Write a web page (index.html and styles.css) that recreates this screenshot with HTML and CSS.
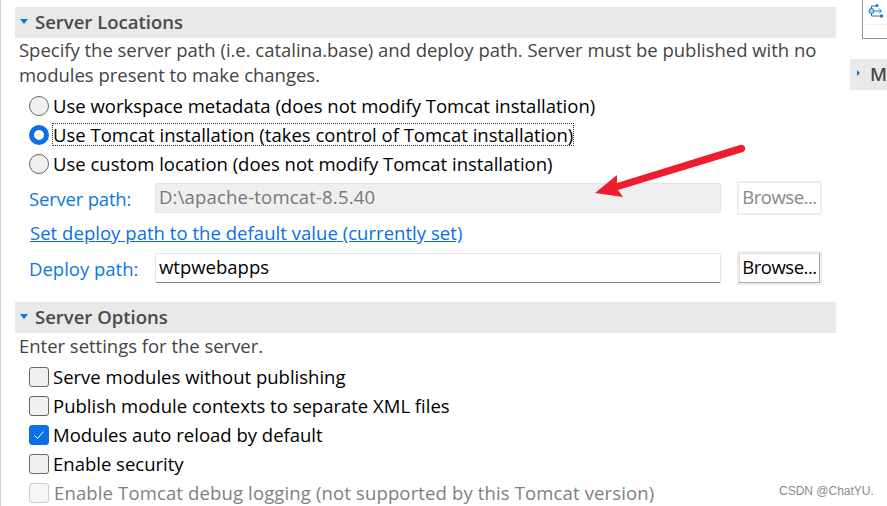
FILE: index.html
```html
<!DOCTYPE html>
<html lang="en">
<head>
    <meta charset="UTF-8">
    <title>Server Overview</title>
    <link rel="stylesheet" href="styles.css">
</head>
<body>
<div class="page">
    <div class="left">
        <div class="bar">
            <svg class="twisty" width="8" height="5" viewBox="0 0 8 5"><path d="M0 0H8L4 5Z"/></svg>
            <span>Server Locations</span>
        </div>
        <p class="desc">Specify the server path (i.e. catalina.base) and deploy path. Server must be published with no modules present to make changes.</p>
        <div class="options radios">
            <label class="opt"><span class="radio"></span><span>Use workspace metadata (does not modify Tomcat installation)</span></label>
            <label class="opt"><span class="radio on"></span><span class="focus">Use Tomcat installation (takes control of Tomcat installation)</span></label>
            <label class="opt"><span class="radio"></span><span>Use custom location (does not modify Tomcat installation)</span></label>
        </div>
        <div class="field server-row">
            <span class="lbl">Server path:</span>
            <span class="input off">D:\apache-tomcat-8.5.40</span>
            <span class="btn off">Browse...</span>
        </div>
        <a class="link" href="#">Set deploy path to the default value (currently set)</a>
        <div class="field deploy-row">
            <span class="lbl">Deploy path:</span>
            <span class="input">wtpwebapps</span>
            <span class="btn">Browse...</span>
        </div>
        <div class="bar bar2">
            <svg class="twisty" width="8" height="5" viewBox="0 0 8 5"><path d="M0 0H8L4 5Z"/></svg>
            <span>Server Options</span>
        </div>
        <p class="desc desc2">Enter settings for the server.</p>
        <div class="options checks">
            <label class="opt"><span class="check"></span><span>Serve modules without publishing</span></label>
            <label class="opt"><span class="check"></span><span>Publish module contexts to separate XML files</span></label>
            <label class="opt"><span class="check on"><svg width="12" height="10" viewBox="0 0 12 10"><path d="M1.5 5.5L4.5 8.5L10.5 1.5" fill="none" stroke="#fff" stroke-width="1"/></svg></span><span>Modules auto reload by default</span></label>
            <label class="opt"><span class="check"></span><span>Enable security</span></label>
            <label class="opt dis"><span class="check"></span><span>Enable Tomcat debug logging (not supported by this Tomcat version)</span></label>
        </div>
    </div>
    <div class="right">
        <div class="panel">
            <svg width="16" height="14" viewBox="0 0 16 14"><g fill="none" stroke="#1a74c4" stroke-width="1"><path d="M4 7H13M11 4.500L13.500 7L11 9.500"/><path d="M3.500 7V12H12"/><path d="M3.500 7V2H8"/><circle cx="3.500" cy="7" r="2.500" fill="#a9d0ee"/></g><circle cx="9" cy="1.500" r="1.500" fill="#1a74c4"/><circle cx="13.500" cy="12" r="1.700" fill="#1a74c4"/></svg>
        </div>
        <div class="side-bar">
            <svg width="4" height="8" viewBox="0 0 4 8"><path d="M0 0L4 4L0 8Z" fill="#0a78e0"/></svg>
            <span>M</span>
        </div>
    </div>
</div>
<svg class="arrow" width="160" height="60" viewBox="0 0 160 60"><path d="M148 2L25 40L25 32L3 50L31 54L26 47L151 9Q154 7 153 4Q151 1 148 2Z" fill="#ee1d2c"/></svg>
<div class="mark">CSDN @ChatYU.</div>
</body>
</html>
```

FILE: styles.css
```css
html, body {
    margin: 0;
    height: 506px;
    overflow: hidden;
    background: #fff;
}
body {
    position: relative;
    font-family: "Open Sans", "Liberation Sans", sans-serif;
    font-size: 18.5px;
    color: #000;
}
.page {
    display: flex;
    height: 506px;
    border-left: 1px solid #cfcfcf;
    box-sizing: border-box;
}
.left {
    width: 821px;
    margin-left: 14px;
    padding-top: 7px;
    flex: none;
}
.bar {
    height: 31px;
    box-sizing: border-box;
    padding-bottom: 3px;
    background: #e9e9e9;
    display: flex;
    align-items: center;
    gap: 7px;
    padding-left: 5px;
    font-weight: 600;
    color: #4a4a4a;
}
.twisty {
    fill: #0a78e0;
}
.desc {
    margin: -1px 0 0;
    padding: 0 4px;
    line-height: 25px;
    letter-spacing: -0.02px;
    color: #444;
}
.options {
    display: flex;
    flex-direction: column;
    margin-left: 14px;
}
.radios {
    margin-top: 4px;
}
.opt {
    height: 29px;
    display: flex;
    align-items: center;
    gap: 4px;
    white-space: nowrap;
}
.radio {
    width: 18px;
    height: 18px;
    border: 1px solid #666;
    border-radius: 50%;
    background: #f0f0f0;
    flex: none;
}
.radio.on {
    width: 10px;
    height: 10px;
    border: 5px solid #0a6fe8;
    background: #fff;
}
.focus {
    outline: 1px dotted #333;
    line-height: 21px;
}
.field {
    display: flex;
    align-items: center;
}
.server-row {
    margin-top: 3px;
    height: 34px;
}
.deploy-row {
    margin-top: 6px;
    height: 34px;
}
.lbl {
    width: 126px;
    margin-left: 14px;
    flex: none;
    color: #0a78e0;
}
.server-row .lbl {
    letter-spacing: -0.2px;
}
.input {
    width: 566px;
    height: 30px;
    line-height: 26px;
    box-sizing: border-box;
    padding-left: 3px;
    border: 1px solid #e6e6e6;
    border-bottom-color: #888;
    border-radius: 2px;
    flex: none;
}
.input.off {
    background: #efefef;
    border-color: #e4e4e4;
    color: #777;
    letter-spacing: 0.18px;
}
.btn {
    width: 85px;
    height: 34px;
    line-height: 28px;
    margin-left: 16px;
    box-sizing: border-box;
    text-align: center;
    letter-spacing: -0.5px;
    background: #fff;
    border: 2px solid #ededed;
    box-shadow: inset -1px -1px 0 #aaa, inset 1px 1px 0 #ddd;
    flex: none;
}
.btn.off {
    color: #888;
    box-shadow: none;
}
.link {
    display: block;
    margin: 5px 0 0 15px;
    height: 25px;
    line-height: 25px;
    letter-spacing: 0.04px;
    color: #0a6fe8;
    text-decoration: underline;
}
.bar2 {
    margin-top: 17px;
}
.desc2 {
    margin-top: 0;
}
.checks {
    margin-top: 4px;
}
.check {
    width: 18px;
    height: 18px;
    border: 1px solid #666;
    border-radius: 3px;
    background: #f0f0f0;
    flex: none;
    display: flex;
    align-items: center;
    justify-content: center;
}
.check.on {
    background: #0a6fe8;
    border-color: #0a6fe8;
}
.dis {
    gap: 5px;
    letter-spacing: 0.14px;
    color: #7f7f7f;
}
.dis .check {
    border-color: #ccc;
    background: #f6f6f6;
}
.right {
    flex: 1;
    min-width: 0;
    overflow: hidden;
    margin-left: 14px;
}
.panel {
    width: 60px;
    height: 39px;
    margin-left: 12px;
    box-sizing: border-box;
    border: 1px solid #8a8f9f;
    border-top: 0;
    padding: 4px 0 0 5px;
}
.panel svg {
    display: block;
}
.panel::after {
    content: "";
    display: block;
    height: 1px;
    margin: 6px 0 0 -3px;
    background: #eee;
}
.side-bar {
    height: 31px;
    margin-top: 20px;
    box-sizing: border-box;
    padding-bottom: 3px;
    background: #e9e9e9;
    display: flex;
    align-items: center;
    gap: 10px;
    padding-left: 7px;
    font-weight: 600;
    color: #4a4a4a;
}
.arrow {
    position: absolute;
    left: 592px;
    top: 143px;
}
.mark {
    position: absolute;
    left: 779px;
    top: 484px;
    font-size: 12px;
    color: #8a8a8a;
    font-family: "Liberation Sans", sans-serif;
}
```
